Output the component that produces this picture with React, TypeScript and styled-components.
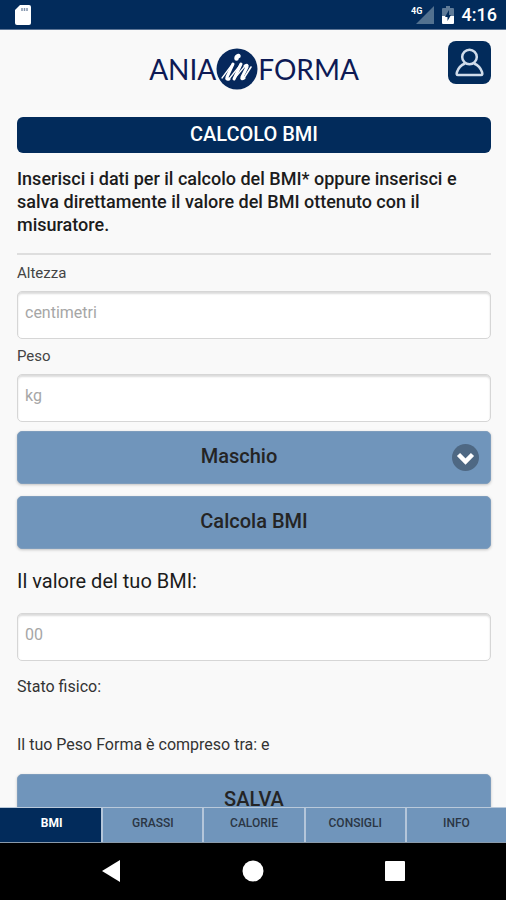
import React, { useState } from "react";
import styled, { createGlobalStyle } from "styled-components";

const navy = "#022b5b";
const blue = "#7095bb";

const GlobalStyle = createGlobalStyle`
  *, *::before, *::after { box-sizing: border-box; }
  body { margin: 0; background: #f9f9f9; }
  button, input, select { font: inherit; }
`;

const Screen = styled.div`
  display: flex;
  flex-direction: column;
  height: 100vh;
  overflow: hidden;
  background: #f9f9f9;
  color: #1c1c1c;
  font-family: Roboto, "Liberation Sans", sans-serif;
`;

const StatusBar = styled.div`
  display: flex;
  flex: none;
  align-items: center;
  justify-content: space-between;
  height: 30px;
  padding: 0 9px 0 15px;
  background: ${navy};
  border-bottom: 1px solid #5d7595;
  color: #fff;
`;

const StatusIcons = styled.div`
  display: flex;
  align-items: center;
  gap: 8px;
`;

const Clock = styled.span`
  font-size: 18px;
  font-weight: 500;
  line-height: 20px;
`;

const Content = styled.main`
  flex: 1;
  min-height: 0;
  padding: 0 15px 0 17px;
  overflow: hidden;
`;

const Header = styled.header`
  display: grid;
  grid-template-columns: 43px 1fr 43px;
  align-items: center;
  height: 87px;
  padding-bottom: 10px;
`;

const Logo = styled.div`
  display: flex;
  grid-column: 2;
  align-items: center;
  justify-content: center;
  color: #0d1a55;
  font-family: Lato, "Liberation Sans", sans-serif;
  font-size: 28px;
  line-height: 40px;
`;

const ProfileButton = styled.button`
  display: grid;
  place-items: center;
  align-self: start;
  width: 43px;
  height: 43px;
  margin-top: 11px;
  padding: 0;
  border: 0;
  border-radius: 8px;
  background: ${navy};
`;

const TitleBar = styled.h1`
  margin: 0;
  padding-bottom: 2px;
  border-radius: 6px;
  background: ${navy};
  color: #fff;
  font-size: 20px;
  font-weight: 500;
  line-height: 34px;
  text-align: center;
`;

const Intro = styled.p`
  margin: 0 0 1px;
  padding: 14px 0 17px;
  border-bottom: 2px solid #dedede;
  font-size: 18px;
  font-weight: 500;
  line-height: 23px;
`;

const Field = styled.div`
  display: flex;
  flex-direction: column;
`;

const Label = styled.label`
  padding: 8px 0;
  color: #444;
  font-size: 15px;
  line-height: 19px;
`;

const BigLabel = styled.label`
  padding: 20px 0;
  font-size: 20px;
  line-height: 24px;
`;

const TextInput = styled.input`
  width: 100%;
  height: 48px;
  padding: 0 7px 5px;
  border: 1px solid #d6d6d6;
  border-radius: 5px;
  background: #fff;
  box-shadow: inset 0 2px 2px #dcdcdc;
  color: #333;
  font-size: 16px;
  &::placeholder { color: #a6a6a6; opacity: 1; }
`;

const Actions = styled.div`
  display: flex;
  flex-direction: column;
  gap: 12px;
  padding-top: 9px;
`;

const SelectBox = styled.div`
  display: grid;
  align-items: center;
  & > * { grid-area: 1 / 1; }
  & > svg { justify-self: end; margin-right: 12px; pointer-events: none; }
`;

const controlLook = `
  width: 100%;
  height: 53px;
  padding: 0 0 3px;
  border: 1px solid #7e9dbd;
  border-radius: 5px;
  background: ${blue};
  box-shadow: 0 1px 3px rgba(0, 0, 0, 0.22);
  color: #242424;
  font-size: 20px;
  font-weight: 500;
  text-align: center;
`;

const GenderSelect = styled.select`
  ${controlLook}
  padding-right: 30px;
  appearance: none;
  text-align-last: center;
`;

const ActionButton = styled.button`
  ${controlLook}
`;

const Result = styled.p`
  margin: 0;
  padding-bottom: 38px;
  color: #333;
  font-size: 16px;
  line-height: 20px;
`;

const Results = styled.div`
  padding-top: 16px;
  & > p:last-of-type { padding-bottom: 19px; }
`;

const Tabs = styled.nav`
  display: flex;
  flex: none;
  height: 36px;
  border-top: 1px solid #b9c9da;
  border-bottom: 1px solid #8a9aab;
`;

const Tab = styled.a<{ $active: boolean }>`
  flex: 1 1 0;
  border-left: 2px solid #b4c6da;
  background: ${(p) => (p.$active ? navy : blue)};
  color: ${(p) => (p.$active ? "#fff" : "#2b3644")};
  font-size: 12px;
  font-weight: ${(p) => (p.$active ? 700 : 500)};
  line-height: 31px;
  text-align: center;
  text-decoration: none;
  &:first-child { border-left-color: ${navy}; }
`;

const SystemBar = styled.div`
  display: grid;
  flex: none;
  grid-template-columns: repeat(3, 28%);
  place-content: center;
  justify-items: center;
  height: 57px;
  padding-bottom: 2px;
  background: #000;
`;

const SystemButton = styled.button`
  display: grid;
  place-items: center;
  width: 40px;
  height: 40px;
  padding: 0;
  border: 0;
  background: transparent;
`;

const tabs = ["BMI", "GRASSI", "CALORIE", "CONSIGLI", "INFO"];

const SdCard = () => (
  <svg width="16" height="20" viewBox="0 0 16 20" aria-hidden="true">
    <path d="M5 0h9q2 0 2 2v16q0 2-2 2H2q-2 0-2-2V5z" fill="#fff" />
    <path d="M7 3v3M9.500 3v3M12 3v3" stroke="#8193ab" strokeWidth="1.500" />
  </svg>
);

const Signal = () => (
  <svg width="23" height="18" viewBox="0 0 23 18" aria-hidden="true">
    <path d="M23 0v18H5z" fill="#52718f" />
    <text x="0" y="8" fill="#fff" fontSize="9" fontWeight="700">4G</text>
  </svg>
);

const Battery = () => (
  <svg width="12" height="18" viewBox="0 0 12 18" aria-hidden="true">
    <path d="M4 0h4v2h3q1 0 1 1v7H0V3q0-1 1-1h3z" fill="#5f7b98" />
    <path d="M0 10h12v7q0 1-1 1H1q-1 0-1-1z" fill="#fff" />
    <path d="M7 4 3 11h2.500v4L9 9H7z" fill={navy} />
  </svg>
);

const LogoMark = () => (
  <svg width="42" height="42" viewBox="0 0 42 42" role="img" aria-label="in">
    <circle cx="21" cy="21" r="20.500" fill="#06285c" />
    <g fill="none" stroke="#fff" strokeLinecap="round" strokeLinejoin="round">
      <path d="M6 30 15 18" strokeWidth="1.300" />
      <path d="M17 16 11 29q-1 3 2 2" strokeWidth="3" />
      <path d="M13 31 25 16" strokeWidth="1.300" />
      <path d="M25 16 18 31" strokeWidth="3" />
      <path d="M18 31 29 18" strokeWidth="1.300" />
      <path d="M29 18q3-2 2 1l-5 10q-1 3 2 1" strokeWidth="3" />
      <path d="M28 30 35 19" strokeWidth="1.600" />
      <path d="M20.500 10.500q0-2 2-2.500" strokeWidth="4.500" />
    </g>
  </svg>
);

const Person = () => (
  <svg width="29" height="29" viewBox="0 0 29 29" fill="none" stroke="#d0dcea" strokeWidth="2.500" aria-hidden="true">
    <circle cx="14.500" cy="9" r="7.300" />
    <path d="M10 15.500Q4 18 2 24q-1 3 1 3h23q2 0 1-3-2-6-8-8.500" strokeLinejoin="round" />
  </svg>
);

const Chevron = () => (
  <svg width="27" height="27" viewBox="0 0 27 27" fill="none" aria-hidden="true">
    <circle cx="13.500" cy="13.500" r="13.500" fill="#4e6883" />
    <path d="m6.500 10.500 7 7 7-7" stroke="#fff" strokeWidth="4.500" />
  </svg>
);

export default function App() {
  const [active, setActive] = useState("BMI");
  return (
    <Screen>
      <GlobalStyle />
      <StatusBar>
        <SdCard />
        <StatusIcons>
          <Signal />
          <Battery />
          <Clock>4:16</Clock>
        </StatusIcons>
      </StatusBar>
      <Content>
        <Header>
          <Logo>
            <span>ANIA</span>
            <LogoMark />
            <span>FORMA</span>
          </Logo>
          <ProfileButton type="button" aria-label="Profilo">
            <Person />
          </ProfileButton>
        </Header>
        <TitleBar>CALCOLO BMI</TitleBar>
        <Intro>
          Inserisci i dati per il calcolo del BMI* oppure inserisci e salva direttamente il valore del BMI ottenuto con
          il misuratore.
        </Intro>
        <Field>
          <Label htmlFor="height">Altezza</Label>
          <TextInput id="height" inputMode="numeric" placeholder="centimetri" />
        </Field>
        <Field>
          <Label htmlFor="weight">Peso</Label>
          <TextInput id="weight" inputMode="numeric" placeholder="kg" />
        </Field>
        <Actions>
          <SelectBox>
            <GenderSelect aria-label="Sesso" defaultValue="Maschio">
              <option>Maschio</option>
              <option>Femmina</option>
            </GenderSelect>
            <Chevron />
          </SelectBox>
          <ActionButton type="button">Calcola BMI</ActionButton>
        </Actions>
        <Field>
          <BigLabel htmlFor="bmi">Il valore del tuo BMI:</BigLabel>
          <TextInput id="bmi" inputMode="decimal" placeholder="00" />
        </Field>
        <Results>
          <Result>Stato fisico:</Result>
          <Result>Il tuo Peso Forma è compreso tra: e</Result>
          <ActionButton type="button">SALVA</ActionButton>
        </Results>
      </Content>
      <Tabs>
        {tabs.map((name) => (
          <Tab
            key={name}
            href={"#" + name.toLowerCase()}
            $active={name === active}
            aria-current={name === active ? "page" : undefined}
            onClick={() => setActive(name)}
          >
            {name}
          </Tab>
        ))}
      </Tabs>
      <SystemBar>
        <SystemButton type="button" aria-label="Indietro">
          <svg width="18" height="22" viewBox="0 0 18 22"><path d="M18 0v22L0 11z" fill="#fff" /></svg>
        </SystemButton>
        <SystemButton type="button" aria-label="Home">
          <svg width="22" height="22" viewBox="0 0 22 22"><circle cx="11" cy="11" r="10.500" fill="#fff" /></svg>
        </SystemButton>
        <SystemButton type="button" aria-label="Recenti">
          <svg width="20" height="20" viewBox="0 0 20 20"><rect width="20" height="20" rx="1" fill="#fff" /></svg>
        </SystemButton>
      </SystemBar>
    </Screen>
  );
}
